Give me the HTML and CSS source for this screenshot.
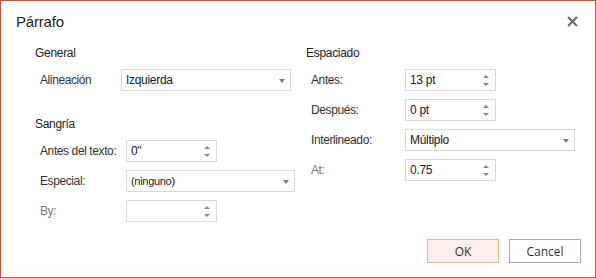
FILE: index.html
```html
<!DOCTYPE html>
<html lang="es">
<head>
<meta charset="UTF-8" />
<title>Párrafo</title>
<link rel="stylesheet" href="styles.css">
</head>
<body>
  <div class="dialog" role="dialog" aria-label="Párrafo">
    <div class="header">
      <h1 class="title">Párrafo</h1>
      <button class="close" aria-label="Cerrar">
        <svg width="11" height="11" viewBox="0 0 11 11"><path d="M1 1L10 10M10 1L1 10" stroke="#6b6b6b" stroke-width="2"/></svg>
      </button>
    </div>

    <div class="content">
      <div class="column column-left">
        <div class="group-title">General</div>
        <div class="row">
          <label class="label label-general">Alineación</label>
          <div class="select select-general"><span>Izquierda</span><i class="caret"></i></div>
        </div>

        <div class="group-title group-second">Sangría</div>
        <div class="row">
          <label class="label label-indent">Antes del texto:</label>
          <div class="spin"><span>0"</span><i class="arrows"></i></div>
        </div>
        <div class="row">
          <label class="label label-indent">Especial:</label>
          <div class="select select-indent"><span class="small">(ninguno)</span><i class="caret"></i></div>
        </div>
        <div class="row">
          <label class="label label-indent disabled">By:</label>
          <div class="spin"><span></span><i class="arrows"></i></div>
        </div>
      </div>

      <div class="column column-right">
        <div class="group-title">Espaciado</div>
        <div class="row">
          <label class="label label-spacing">Antes:</label>
          <div class="spin"><span>13 pt</span><i class="arrows"></i></div>
        </div>
        <div class="row">
          <label class="label label-spacing">Después:</label>
          <div class="spin"><span>0 pt</span><i class="arrows"></i></div>
        </div>
        <div class="row">
          <label class="label label-spacing">Interlineado:</label>
          <div class="select select-general"><span>Múltiplo</span><i class="caret"></i></div>
        </div>
        <div class="row">
          <label class="label label-spacing disabled">At:</label>
          <div class="spin"><span>0.75</span><i class="arrows"></i></div>
        </div>
      </div>
    </div>

    <div class="footer">
      <button class="btn btn-ok">OK</button>
      <button class="btn">Cancel</button>
    </div>
  </div>
</body>
</html>
```

FILE: styles.css
```css
*, *:before, *:after {
  box-sizing: border-box;
}

body {
  margin: 0;
  background: #fff;
  font-family: "Liberation Sans", Arial, sans-serif;
  font-size: 12px;
  color: #222;
}

.dialog {
  width: 596px;
  height: 278px;
  border: 1px solid #c0563a;
  display: flex;
  flex-direction: column;
  background: #fff;
}

.header {
  height: 40px;
  display: flex;
  align-items: center;
  justify-content: space-between;
  padding: 0 13px 0 15px;
}

.title {
  margin: 0;
  font-size: 15px;
  font-weight: normal;
  color: #222;
  letter-spacing: -0.2px;
}

.close {
  width: 20px;
  height: 20px;
  border: none;
  background: none;
  padding: 0;
  display: flex;
  align-items: center;
  justify-content: center;
  cursor: pointer;
}

.content {
  display: flex;
  padding-left: 34px;
}

.column {
  display: flex;
  flex-direction: column;
  gap: 8px;
}

.column-left {
  width: 271px;
}

.group-title {
  height: 16px;
  line-height: 16px;
  margin-top: 4px;
  color: #222;
  letter-spacing: -0.3px;
}

.group-second {
  margin-top: 17px;
}

.row {
  display: flex;
  align-items: center;
  height: 22px;
  padding-left: 5px;
}

.label {
  color: #333;
  letter-spacing: -0.4px;
}

.label.disabled {
  color: #7a7a7a;
}

.label-general { width: 81px; }
.label-indent { width: 86px; }
.label-spacing { width: 94px; }

.select,
.spin {
  position: relative;
  height: 22px;
  border: 1px solid #d9d9d9;
  display: flex;
  align-items: center;
  padding-left: 4px;
  color: #1a1a1a;
  letter-spacing: -0.3px;
}

.select-general { width: 170px; }
.select-indent { width: 169px; }
.spin { width: 91px; }

.small {
  font-size: 11px;
}

.caret {
  position: absolute;
  right: 5px;
  top: 9px;
  width: 0;
  height: 0;
  border-left: 3.5px solid transparent;
  border-right: 3.5px solid transparent;
  border-top: 4px solid #7a7a7a;
}

.arrows {
  position: absolute;
  right: 6px;
  top: 5px;
  width: 7px;
  height: 11px;
}

.arrows:before,
.arrows:after {
  content: "";
  position: absolute;
  left: 1px;
  width: 0;
  height: 0;
  border-left: 3px solid transparent;
  border-right: 3px solid transparent;
}

.arrows:before {
  top: 0;
  border-bottom: 3px solid #888;
}

.arrows:after {
  bottom: 0;
  border-top: 3px solid #888;
}

.footer {
  margin-top: auto;
  display: flex;
  justify-content: flex-end;
  gap: 10px;
  padding: 0 14px 14px 0;
}

.btn {
  width: 72px;
  height: 24px;
  border: 1px solid #ababab;
  background: #fff;
  font-family: "Open Sans", "Liberation Sans", sans-serif;
  font-size: 12px;
  color: #333;
  padding: 0;
  cursor: pointer;
}

.btn-ok {
  background: #fcefea;
  border-color: #f4b49a;
}
```
